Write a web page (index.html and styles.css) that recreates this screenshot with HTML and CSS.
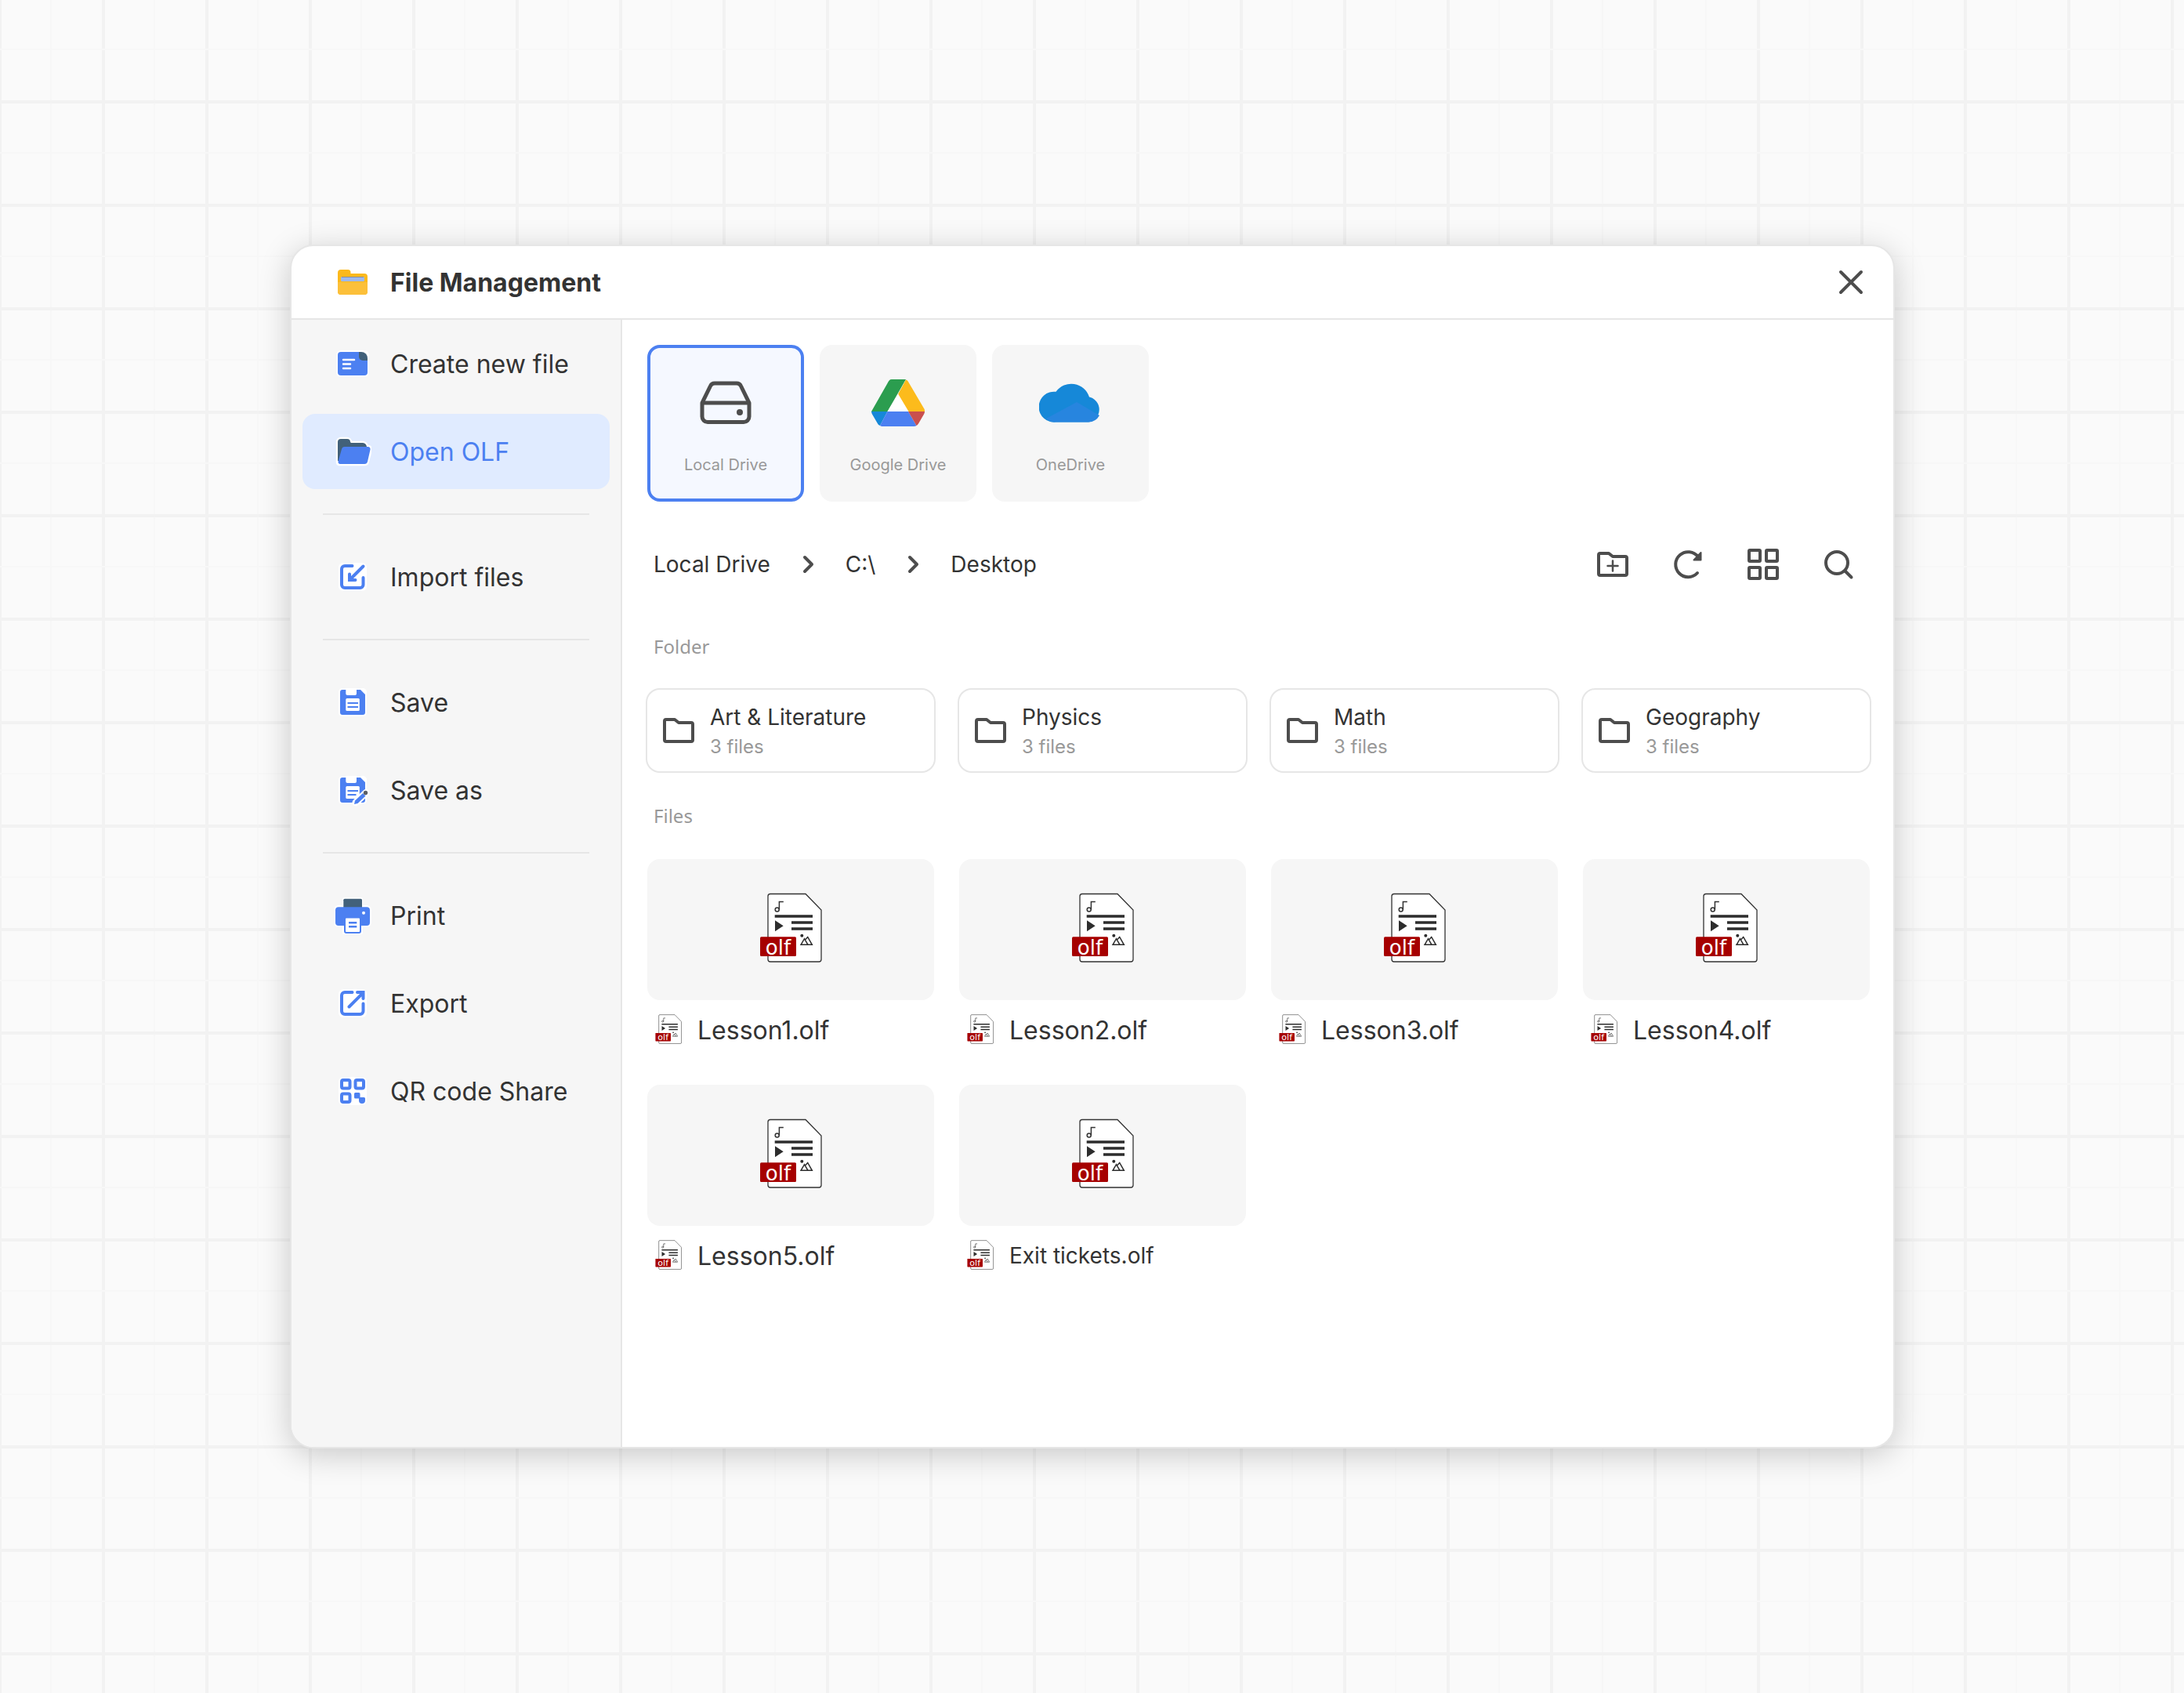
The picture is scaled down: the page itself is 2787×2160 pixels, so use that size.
FILE: index.html
```html
<!DOCTYPE html>
<html lang="en">
<head>
  <meta charset="UTF-8" />
  <meta name="viewport" content="width=device-width, initial-scale=1.0"/>
  <title>File Management</title>
  <link rel="stylesheet" href="styles.css">
</head>
<body>
  <!-- shared icons -->
  <svg class="sprite" aria-hidden="true">
    <symbol id="icon-folder" viewBox="0 0 48 48">
      <path d="M6 12a2 2 0 0 1 2-2h11l5 4h16a2 2 0 0 1 2 2v20a2 2 0 0 1-2 2H8a2 2 0 0 1-2-2z" fill="none" stroke="#4d4d4d" stroke-width="4" stroke-linejoin="round"/>
    </symbol>
    <symbol id="icon-chevron" viewBox="0 0 48 48">
      <path d="M20 15l9 9-9 9" fill="none" stroke="#4d4d4d" stroke-width="4" stroke-linecap="round" stroke-linejoin="round"/>
    </symbol>
    <symbol id="icon-olf" viewBox="0 0 80 94" overflow="visible">
      <path d="M14 1.5H59L79 22V85a3 3 0 0 1-3 3H14a3 3 0 0 1-3-3V4.500a3 3 0 0 1 3-3z" fill="#fff" stroke="#333" stroke-width="1.300"/>
      <circle cx="22.700" cy="21.500" r="2.500" fill="none" stroke="#333" stroke-width="1.500"/>
      <path d="M25.400 21.500V11.500h5.400" fill="none" stroke="#333" stroke-width="1.500"/>
      <path d="M19.700 30H68M41 38h27M41 46h27" stroke="#2d2d2d" stroke-width="3.300"/>
      <path d="M20 35.300l10.700 7-10.700 7z" fill="#2d2d2d"/>
      <circle cx="54.300" cy="54.700" r="2" fill="#2d2d2d"/>
      <path d="M53 66.300l4.500-7.600 4.500 7.600zM58.500 60l3.200-3.500 5.600 9.800H62" fill="none" stroke="#2d2d2d" stroke-width="1.500"/>
      <rect x="1" y="56.300" width="46" height="24.700" rx="1.500" fill="#a60000"/>
      <text x="24" y="78.500" text-anchor="middle" class="olf-text">olf</text>
    </symbol>
  </svg>

  <main class="dialog">
    <header class="dialog-header">
      <svg class="icon" viewBox="0 0 48 48">
        <path d="M5 12a4 4 0 0 1 4-4h9a3.500 3.500 0 0 1 3.500 3.500V13H39a4 4 0 0 1 4 4v19a4 4 0 0 1-4 4H9a4 4 0 0 1-4-4z" fill="#fcb91c"/>
        <path d="M5 24h38v12a4 4 0 0 1-4 4H9a4 4 0 0 1-4-4z" fill="#fcc03a"/>
        <rect x="9" y="17" width="30" height="6" rx="1.500" fill="#9db9f0"/>
        <path d="M10 17.500h28" stroke="#8a8f98" stroke-width="1"/>
      </svg>
      <h1>File Management</h1>
      <button class="icon-button close" aria-label="Close">
        <svg class="icon" viewBox="0 0 48 48"><path d="M11 11l26 26M37 11L11 37" stroke="#4d4d4d" stroke-width="4" stroke-linecap="round"/></svg>
      </button>
    </header>

    <div class="dialog-body">
      <nav class="sidebar">
        <button class="menu-item">
          <svg class="icon" viewBox="0 0 48 48">
            <rect x="3" y="7" width="42" height="34" rx="6" fill="#fff"/>
            <path d="M9 9h24l10 10v16a4 4 0 0 1-4 4H9a4 4 0 0 1-4-4V13a4 4 0 0 1 4-4z" fill="#4c80f1"/>
            <path d="M32 9h3a8 8 0 0 1 8 8v3h-6a5 5 0 0 1-5-5z" fill="#42617a"/>
            <path d="M12 19h14M12 24.500h9M12 30h9" stroke="#fff" stroke-width="2.500" stroke-linecap="round"/>
          </svg>
          Create new file
        </button>
        <button class="menu-item active">
          <svg class="icon" viewBox="0 0 48 48">
            <path d="M5 12a4 4 0 0 1 4-4h8a4 4 0 0 1 4 4l1 1h15a6 6 0 0 1 5 5h2a3 3 0 0 1 2.700 3.500L43 37a4 4 0 0 1-4 3H7a2 2 0 0 1-2-2z" fill="#fff" stroke="#fff" stroke-width="4.500" stroke-linejoin="round"/>
            <path d="M5 12a4 4 0 0 1 4-4h8a4 4 0 0 1 4 4l1 1h15a6 6 0 0 1 5 5L40 36H5z" fill="#42617a"/>
            <path d="M14 18h29.500a3 3 0 0 1 3 3.700L43 37a4 4 0 0 1-4 3H8a2.500 2.500 0 0 1-2.500-3l4.500-16a4 4 0 0 1 4-3z" fill="#4c80f1"/>
          </svg>
          Open OLF
        </button>
        <hr>
        <button class="menu-item">
          <svg class="icon" viewBox="0 0 48 48">
            <rect x="6" y="6" width="36" height="36" rx="6" fill="#fff"/>
            <g fill="none" stroke="#4c80f1" stroke-width="4" stroke-linecap="round">
              <path d="M23.500 10H14a4 4 0 0 0-4 4v20a4 4 0 0 0 4 4h19.500a4 4 0 0 0 4-4v-9"/>
              <path d="M37.500 10.500L21 27M20 20.500V28h7.500"/>
            </g>
          </svg>
          Import files
        </button>
        <hr>
        <button class="menu-item">
          <svg class="icon" viewBox="0 0 48 48">
            <rect x="6" y="6" width="36" height="36" rx="5" fill="#fff"/>
            <path d="M11 8h4.300v5a2 2 0 0 0 2 2H27a2 2 0 0 0 2-2V8h5l6 6v23a3 3 0 0 1-3 3H11a3 3 0 0 1-3-3V11a3 3 0 0 1 3-3z" fill="#4c80f1"/>
            <rect x="15.300" y="19" width="17.500" height="16" rx="1.500" fill="#fff"/>
            <path d="M17.500 25h13.500M17.500 30h13.500" stroke="#4c80f1" stroke-width="2"/>
          </svg>
          Save
        </button>
        <button class="menu-item">
          <svg class="icon" viewBox="0 0 48 48">
            <rect x="6" y="6" width="36" height="36" rx="5" fill="#fff"/>
            <path d="M11 8h4.300v5a2 2 0 0 0 2 2H27a2 2 0 0 0 2-2V8h5l6 6v23a3 3 0 0 1-3 3H11a3 3 0 0 1-3-3V11a3 3 0 0 1 3-3z" fill="#4c80f1"/>
            <rect x="15.300" y="19" width="17.500" height="16" rx="1.500" fill="#fff"/>
            <path d="M17.500 25h13.500M17.500 30h11" stroke="#4c80f1" stroke-width="2"/>
            <path d="M28 40L41 27.500" stroke="#fff" stroke-width="9" stroke-linecap="round"/>
            <path d="M26 42l1-4.500L37 28l3.500 3.500-10 9.500z" fill="#4c80f1"/>
            <circle cx="40.500" cy="27.500" r="2.700" fill="#5b5f66"/>
          </svg>
          Save as
        </button>
        <hr>
        <button class="menu-item">
          <svg class="icon" viewBox="0 0 48 48">
            <path d="M13 3h22v10h7a4 4 0 0 1 4 4v16a4 4 0 0 1-4 4h-7v9H13v-9H6a4 4 0 0 1-4-4V17a4 4 0 0 1 4-4h7z" fill="#fff" stroke="#fff" stroke-width="4" stroke-linejoin="round"/>
            <rect x="12.300" y="2.700" width="23.700" height="13" rx="1.500" fill="#42617a"/>
            <rect x="2" y="13.300" width="44" height="23.700" rx="4" fill="#4c80f1"/>
            <rect x="14" y="26.500" width="20" height="19.500" rx="2" fill="#fff" stroke="#4c80f1" stroke-width="2"/>
            <path d="M19 33.300h10.300M19 38.300h10.300" stroke="#4c80f1" stroke-width="2.500"/>
            <circle cx="38" cy="20.700" r="2" fill="#fff"/>
          </svg>
          Print
        </button>
        <button class="menu-item">
          <svg class="icon" viewBox="0 0 48 48">
            <rect x="6" y="6" width="36" height="36" rx="6" fill="#fff"/>
            <g fill="none" stroke="#4c80f1" stroke-width="4" stroke-linecap="round">
              <path d="M23.500 10H14a4 4 0 0 0-4 4v20a4 4 0 0 0 4 4h19.500a4 4 0 0 0 4-4V24.500"/>
              <path d="M19.500 28.500L36 12M30 10h7.500v8"/>
            </g>
          </svg>
          Export
        </button>
        <button class="menu-item">
          <svg class="icon" viewBox="0 0 48 48">
            <rect x="6" y="6" width="36" height="36" rx="6" fill="#fff"/>
            <g fill="none" stroke="#4c80f1" stroke-width="4">
              <rect x="10" y="10" width="10.500" height="10.500" rx="2"/>
              <rect x="27.500" y="10" width="10.500" height="10.500" rx="2"/>
              <rect x="10" y="27.500" width="10.500" height="10.500" rx="2"/>
            </g>
            <path d="M27.500 26H32a1.500 1.500 0 0 1 1.500 1.500V32H38.500a1.500 1.500 0 0 1 1.500 1.500V36a4 4 0 0 1-4 4 4 4 0 0 1-4-4v-2.500h-4.500A1.500 1.500 0 0 1 26 32v-4.500a1.500 1.500 0 0 1 1.500-1.500z" fill="#4c80f1"/>
          </svg>
          QR code Share
        </button>
      </nav>

      <section class="content">
        <div class="drives">
          <button class="drive selected">
            <svg viewBox="0 0 80 80">
              <g fill="none" stroke="#4d4d4d" stroke-width="5" stroke-linejoin="round">
                <path d="M10 40L20.500 18.500a6 6 0 0 1 5.500-3.500h28a6 6 0 0 1 5.500 3.500L70 40v17.500a7 7 0 0 1-7 7H17a7 7 0 0 1-7-7z"/>
                <path d="M10 40h60"/>
              </g>
              <circle cx="58" cy="52" r="4" fill="#4d4d4d"/>
            </svg>
            Local Drive
          </button>
          <button class="drive">
            <svg viewBox="0 0 80 80">
              <path d="M6 51L26.500 15C28 12 29 10 32 10h18l-10 17.500L26.500 51z" fill="#2b9d4f"/>
              <path d="M40 29l10-18.500c1.500.5 2.500 1.500 3 2.500L73 47c1 1.500 1 2.500 1 4H53z" fill="#fcbb1c"/>
              <path d="M6 51h20.500L17 69c-1.500-.5-2.500-1.500-3-2.500L7 54.500c-.7-1.200-1-2.200-1-3.500z" fill="#1688d8"/>
              <path d="M26.500 51H53l10.500 18c-1 .6-2.500 1-4 1h-39c-1.500 0-2.500-.4-3.500-1z" fill="#4c80f1"/>
              <path d="M53 51h21c0 1.300-.3 2.300-1 3.500l-7 12c-.7 1.200-1.500 2-2.500 2.500z" fill="#c9504e"/>
              <path d="M40 28.500L26.500 51h27z" fill="#fff"/>
            </svg>
            Google Drive
          </button>
          <button class="drive">
            <svg viewBox="-1 0 80 80">
              <path d="M20.500 64.500A19.500 19.500 0 1 1 20.500 25.800 24 24 0 0 1 63 32.500 16.300 16.300 0 0 1 62 64.500z" fill="#1688d8"/>
              <path d="M8 60L47 39l29 17a16.300 16.300 0 0 1-14 8.500H20.500A19.500 19.500 0 0 1 8 60z" fill="#2785df"/>
            </svg>
            OneDrive
          </button>
        </div>

        <div class="toolbar">
          <nav class="breadcrumb" aria-label="Path">
            <a href="#">Local Drive</a>
            <svg class="icon"><use href="#icon-chevron"/></svg>
            <a href="#">C:\</a>
            <svg class="icon"><use href="#icon-chevron"/></svg>
            <a href="#">Desktop</a>
          </nav>
          <div class="tools">
            <button class="icon-button" aria-label="New folder">
              <svg class="icon" viewBox="0 0 48 48"><use href="#icon-folder"/><path d="M24 19.500v13M17.500 26h13" stroke="#4d4d4d" stroke-width="2.500" stroke-linecap="round"/></svg>
            </button>
            <button class="icon-button" aria-label="Refresh">
              <svg class="icon" viewBox="0 0 48 48">
                <path d="M36 35A16 16 0 1 1 37 14.500" fill="none" stroke="#4d4d4d" stroke-width="4" stroke-linecap="round"/>
                <path d="M40.500 9v9.500h-9z" fill="#4d4d4d" stroke="#4d4d4d" stroke-width="2" stroke-linejoin="round"/>
              </svg>
            </button>
            <button class="icon-button" aria-label="Grid view">
              <svg class="icon" viewBox="0 0 48 48">
                <g fill="none" stroke="#4d4d4d" stroke-width="4">
                  <rect x="6" y="6" width="14" height="14" rx="1"/>
                  <rect x="28" y="6" width="14" height="14" rx="1"/>
                  <rect x="6" y="28" width="14" height="14" rx="1"/>
                  <rect x="28" y="28" width="14" height="14" rx="1"/>
                </g>
              </svg>
            </button>
            <button class="icon-button" aria-label="Search">
              <svg class="icon" viewBox="0 0 48 48">
                <g fill="none" stroke="#4d4d4d" stroke-width="4" stroke-linecap="round">
                  <circle cx="22" cy="22" r="14"/>
                  <path d="M33 33l7.500 7.500"/>
                </g>
              </svg>
            </button>
          </div>
        </div>

        <h2>Folder</h2>
        <div class="grid">
          <button class="folder">
            <svg class="icon"><use href="#icon-folder"/></svg>
            <span class="folder-text"><span class="folder-name">Art &amp; Literature</span><span class="folder-count">3 files</span></span>
          </button>
          <button class="folder">
            <svg class="icon"><use href="#icon-folder"/></svg>
            <span class="folder-text"><span class="folder-name">Physics</span><span class="folder-count">3 files</span></span>
          </button>
          <button class="folder">
            <svg class="icon"><use href="#icon-folder"/></svg>
            <span class="folder-text"><span class="folder-name">Math</span><span class="folder-count">3 files</span></span>
          </button>
          <button class="folder">
            <svg class="icon"><use href="#icon-folder"/></svg>
            <span class="folder-text"><span class="folder-name">Geography</span><span class="folder-count">3 files</span></span>
          </button>
        </div>

        <h2>Files</h2>
        <div class="grid files">
          <a class="file" href="#">
            <span class="thumb"><svg><use href="#icon-olf"/></svg></span>
            <span class="file-name"><svg><use href="#icon-olf"/></svg>Lesson1.olf</span>
          </a>
          <a class="file" href="#">
            <span class="thumb"><svg><use href="#icon-olf"/></svg></span>
            <span class="file-name"><svg><use href="#icon-olf"/></svg>Lesson2.olf</span>
          </a>
          <a class="file" href="#">
            <span class="thumb"><svg><use href="#icon-olf"/></svg></span>
            <span class="file-name"><svg><use href="#icon-olf"/></svg>Lesson3.olf</span>
          </a>
          <a class="file" href="#">
            <span class="thumb"><svg><use href="#icon-olf"/></svg></span>
            <span class="file-name"><svg><use href="#icon-olf"/></svg>Lesson4.olf</span>
          </a>
          <a class="file" href="#">
            <span class="thumb"><svg><use href="#icon-olf"/></svg></span>
            <span class="file-name"><svg><use href="#icon-olf"/></svg>Lesson5.olf</span>
          </a>
          <a class="file" href="#">
            <span class="thumb"><svg><use href="#icon-olf"/></svg></span>
            <span class="file-name long"><svg><use href="#icon-olf"/></svg>Exit tickets.olf</span>
          </a>
        </div>
      </section>
    </div>
  </main>
</body>
</html>
```
FILE: styles.css
```css
* {
  box-sizing: border-box;
}
body {
  margin: 0;
  padding-left: 1px;
  min-height: 100vh;
  display: flex;
  align-items: center;
  justify-content: center;
  font-family: Inter, sans-serif;
  color: #333;
  background-color: #fafafa;
  /* squared paper: thick lines every 132px, thin ones between */
  background-image:
    linear-gradient(#f2f2f2 4px, transparent 4px),
    linear-gradient(#f7f7f7 2px, transparent 2px),
    linear-gradient(90deg, #f2f2f2 4px, transparent 4px),
    linear-gradient(90deg, #f7f7f7 2px, transparent 2px);
  background-size: 132px 132px;
  background-position: 0 -4px, 0 62px, -2px 0, 64px 0;
}
svg {
  display: block;
  flex: none;
}
button {
  font: inherit;
  color: inherit;
  border: none;
  background: none;
  padding: 0;
  margin: 0;
  cursor: pointer;
  text-align: left;
}
a {
  color: inherit;
  text-decoration: none;
}
.sprite {
  position: absolute;
  width: 0;
  height: 0;
  overflow: visible;
}
.icon {
  width: 48px;
  height: 48px;
}
.olf-text {
  font-family: "DejaVu Sans", sans-serif;
  font-size: 26px;
  fill: #fff;
}

.dialog {
  width: 100%;
  max-width: 2048px;
  min-height: 1536px;
  display: flex;
  flex-direction: column;
  background: #fff;
  border: 2px solid #e6e6e6;
  border-radius: 30px;
  box-shadow: 0 8px 40px rgba(0, 0, 0, 0.2);
  overflow: hidden;
}
.dialog-header {
  display: flex;
  align-items: center;
  gap: 24px;
  height: 94px;
  padding: 0 30px 0 54px;
  border-bottom: 2px solid #e6e6e6;
}
.dialog-header h1 {
  margin: 0;
  font-size: 32px;
  font-weight: 700;
}
.close {
  margin-left: auto;
}
.dialog-body {
  flex: 1;
  display: flex;
}

.sidebar {
  flex: none;
  width: 422px;
  display: flex;
  flex-direction: column;
  gap: 16px;
  padding: 8px 14px;
  background: #f6f6f6;
  border-right: 2px solid #e6e6e6;
}
.sidebar hr {
  width: auto;
  height: 2px;
  margin: 15px 26px;
  border: none;
  background: #e6e6e6;
}
.menu-item {
  display: flex;
  align-items: center;
  gap: 24px;
  height: 96px;
  padding: 0 40px;
  border-radius: 16px;
  font-size: 32px;
}
.menu-item.active {
  background: #e0ebff;
  color: #4c80f1;
}

.content {
  flex: 1;
  padding: 32px 30px 32px 32px;
}
.drives {
  display: flex;
  gap: 20px;
}
.drive {
  display: flex;
  flex-direction: column;
  align-items: center;
  gap: 27px;
  width: 200px;
  height: 200px;
  padding-top: 30px;
  border: 4px solid #f6f6f6;
  border-radius: 16px;
  background: #f6f6f6;
  color: #999;
  font-size: 20px;
  line-height: 24px;
}
.drive svg {
  width: 80px;
  height: 80px;
}
.drive.selected {
  border-color: #4c80f1;
  background: #f5f8ff;
}

.toolbar {
  display: flex;
  align-items: center;
  justify-content: space-between;
  margin-top: 56px;
  padding: 0 16px 0 8px;
}
.breadcrumb {
  display: flex;
  align-items: center;
  gap: 24px;
  font-size: 28px;
}
.tools {
  display: flex;
  gap: 48px;
}

h2 {
  margin: 64px 0 38px;
  padding-left: 8px;
  font-family: "Noto Sans", sans-serif;
  font-size: 24px;
  font-weight: 400;
  line-height: 34px;
  color: #999;
}
.grid {
  display: grid;
  grid-template-columns: repeat(4, 1fr);
  gap: 32px;
}
.grid + h2 {
  margin-top: 40px;
}
.folder {
  display: flex;
  align-items: center;
  gap: 16px;
  height: 104px;
  padding: 0 16px;
  border-radius: 16px;
  box-shadow: 0 0 0 2px #e6e6e6;
}
.folder-text {
  display: flex;
  flex-direction: column;
}
.folder-name {
  font-size: 28px;
  line-height: 42px;
}
.folder-count {
  font-size: 24px;
  line-height: 34px;
  color: #999;
}

.thumb {
  display: flex;
  align-items: center;
  justify-content: center;
  height: 180px;
  border-radius: 16px;
  background: #f6f6f6;
}
.thumb svg {
  width: 80px;
  height: 94px;
}
.file-name {
  display: flex;
  align-items: center;
  gap: 20px;
  height: 76px;
  padding-left: 10px;
  font-size: 32px;
}
.file-name svg {
  width: 34px;
  height: 40px;
}
.file-name.long {
  font-size: 28px;
}
```
